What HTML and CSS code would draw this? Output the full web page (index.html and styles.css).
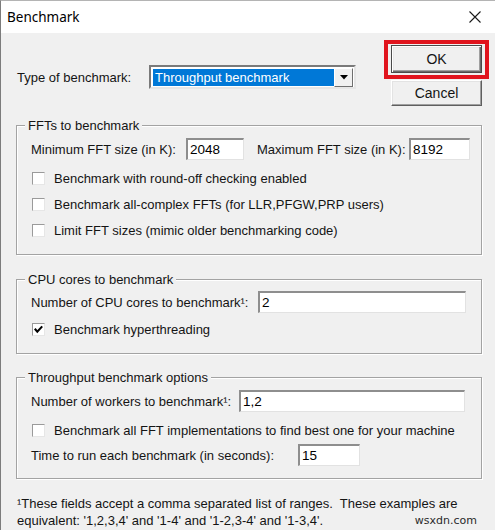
FILE: index.html
```html
<!DOCTYPE html>
<html>
<head>
<meta charset="utf-8">
<title>Benchmark</title>
<link rel="stylesheet" href="styles.css">
</head>
<body>
<div class="window">
  <div class="titlebar">
    <span class="title">Benchmark</span>
    <svg class="close" width="12" height="12" viewBox="0 0 12 12"><path d="M0.5 0.5L11.5 11.5M11.5 0.5L0.5 11.5" stroke="#1a1a1a" stroke-width="1.1" fill="none"/></svg>
  </div>
  <div class="content">
    <div class="top">
      <div class="type-row">
        <span class="lbl-type">Type of benchmark:</span>
        <div class="combo">
          <span class="combo-sel">Throughput benchmark</span>
          <span class="combo-btn"><svg width="8" height="5" viewBox="0 0 8 5"><path d="M0 0H8L4 4.5Z" fill="#000"/></svg></span>
        </div>
      </div>
      <div class="buttons">
        <div class="btn btn-default highlight">OK</div>
        <div class="btn">Cancel</div>
      </div>
    </div>

    <div class="group g1">
      <div class="legend">FFTs to benchmark</div>
      <div class="row">
        <span class="lbl lbl-min">Minimum FFT size (in K):</span>
        <span class="field f-min">2048</span>
        <span class="lbl lbl-max">Maximum FFT size (in K):</span>
        <span class="field f-max">8192</span>
      </div>
      <div class="cb-list">
        <div class="cb-row"><span class="box"></span><span class="cb-text">Benchmark with round-off checking enabled</span></div>
        <div class="cb-row"><span class="box"></span><span class="cb-text">Benchmark all-complex FFTs (for LLR,PFGW,PRP users)</span></div>
        <div class="cb-row"><span class="box"></span><span class="cb-text">Limit FFT sizes (mimic older benchmarking code)</span></div>
      </div>
    </div>

    <div class="group g2">
      <div class="legend">CPU cores to benchmark</div>
      <div class="row">
        <span class="lbl lbl-cpu">Number of CPU cores to benchmark¹:</span>
        <span class="field f-cpu">2</span>
      </div>
      <div class="cb-row cb-after"><span class="box"><svg width="11" height="11" viewBox="0 0 11 11"><path d="M1.8 4.8L4.3 7.6L9.2 2.4" stroke="#000" stroke-width="2.1" fill="none"/></svg></span><span class="cb-text">Benchmark hyperthreading</span></div>
    </div>

    <div class="group g3">
      <div class="legend">Throughput benchmark options</div>
      <div class="row">
        <span class="lbl lbl-workers">Number of workers to benchmark¹:</span>
        <span class="field f-workers">1,2</span>
      </div>
      <div class="cb-row cb-after3"><span class="box"></span><span class="cb-text">Benchmark all FFT implementations to find best one for your machine</span></div>
      <div class="row row-time">
        <span class="lbl lbl-time">Time to run each benchmark (in seconds):</span>
        <span class="field f-time">15</span>
      </div>
    </div>

    <div class="footnote">
      <div class="fn-line">¹These fields accept a comma separated list of ranges.&nbsp; These examples are</div>
      <div class="fn-line fn-last">
        <span>equivalent: '1,2,3,4' and '1-4' and '1-2,3-4' and '1-3,4'.</span>
        <span class="watermark">wsxdn.com</span>
      </div>
    </div>
  </div>
</div>
</body>
</html>
```

FILE: styles.css
```css
html, body {
  margin: 0;
  padding: 0;
}
body {
  width: 495px;
  height: 530px;
  overflow: hidden;
  background: #f0f0f0;
  font-family: "Liberation Sans", Arial, sans-serif;
  font-size: 13px;
  color: #141414;
}
.window {
  width: 494px;
  height: 529px;
  border-left: 1px solid #7c7c7c;
  border-top: 1px solid #b4b4b4;
  background: #f0f0f0;
}
.titlebar {
  height: 32px;
  background: #ffffff;
  display: flex;
  align-items: center;
  justify-content: space-between;
  padding: 0 14px 0 6px;
}
.title {
  font-family: "Noto Sans", "Open Sans", sans-serif;
  font-size: 13.5px;
  color: #000;
  margin-top: -1px;
}
.close {
  display: block;
  margin-top: -1px;
}
.content {
  padding: 0 13px 0 15px;
}
.top {
  display: flex;
  justify-content: space-between;
  align-items: flex-start;
  padding-top: 12px;
}
.type-row {
  display: flex;
  align-items: center;
  margin-top: 20px;
  margin-left: 1px;
}
.lbl-type {
  width: 132px;
}
.combo {
  width: 207px;
  height: 24px;
  box-sizing: border-box;
  border-style: solid;
  border-width: 2px;
  border-color: #7a7a7a #e6e6e6 #e6e6e6 #7a7a7a;
  background: #ffffff;
  display: flex;
  align-items: center;
  padding-right: 1px;
}
.combo-sel {
  flex: 1;
  height: 17px;
  line-height: 17px;
  margin-left: 2px;
  background: #0078d7;
  color: #ffffff;
  padding-left: 2px;
}
.combo-btn {
  width: 19px;
  height: 19px;
  box-sizing: border-box;
  border-style: solid;
  border-width: 1px;
  border-color: #ffffff #6f6f6f #6f6f6f #ffffff;
  background: #f0f0f0;
  display: flex;
  align-items: center;
  justify-content: center;
}
.combo-btn svg {
  display: block;
}
.buttons {
  display: flex;
  flex-direction: column;
  gap: 7px;
}
.btn {
  width: 91px;
  height: 26px;
  box-sizing: border-box;
  display: flex;
  align-items: center;
  justify-content: center;
  background: #f0f0f0;
  border-style: solid;
  border-width: 1px;
  border-color: #ffffff #5f5f5f #5f5f5f #ffffff;
  box-shadow: inset -1px -1px 0 #a0a0a0, inset 1px 1px 0 #e3e3e3;
  font-size: 14px;
}
.btn-default {
  height: 28px;
  border: 1px solid #4a4a4a;
  box-shadow: inset 1px 1px 0 #ffffff, inset -1px -1px 0 #6a6a6a, inset -2px -2px 0 #a0a0a0, inset 2px 2px 0 #e8e8e8;
}
.highlight {
  position: relative;
}
.highlight::after {
  content: "";
  position: absolute;
  left: -8px;
  right: -8px;
  top: -6px;
  bottom: -7px;
  border: 4px solid #e0141d;
  pointer-events: none;
}
.group {
  border: 1px solid #a3a3a3;
  box-shadow: 1px 1px 0 #ffffff, inset 1px 1px 0 #ffffff;
  padding: 0 0 11px 14px;
}
.g1 { margin-top: 19px; }
.g2 { margin-top: 24px; }
.g3 { margin-top: 23px; padding-bottom: 12px; }
.legend {
  width: fit-content;
  margin-top: -8px;
  margin-left: -6px;
  padding: 0 3px;
  height: 15px;
  line-height: 15px;
  background: #f0f0f0;
}
.row {
  display: flex;
  align-items: center;
  margin-top: 5px;
  height: 22px;
}
.g2 .row { margin-top: 4px; }
.lbl {
  white-space: nowrap;
  flex-shrink: 0;
}
.lbl-min { width: 155px; }
.lbl-max { width: 152px; margin-left: 13px; }
.lbl-cpu { width: 227px; }
.lbl-workers { width: 208px; }
.lbl-time { width: 267px; }
.field {
  flex-shrink: 0;
  height: 22px;
  box-sizing: border-box;
  background: #ffffff;
  border-style: solid;
  border-width: 2px 1px 1px 2px;
  border-color: #8e8e8e #e2e2e2 #e2e2e2 #8e8e8e;
  padding-left: 2px;
  line-height: 19px;
  font-size: 13.5px;
  color: #000;
}
.f-min { width: 58px; }
.f-max { width: 61px; }
.f-cpu { width: 208px; }
.f-workers { width: 226px; }
.f-time { width: 62px; }
.cb-list {
  margin-top: 5px;
}
.cb-row {
  display: flex;
  align-items: center;
  height: 26px;
}
.cb-after { margin-top: 3px; }
.cb-after3 { margin-top: 5px; }
.row-time { margin-top: 1px; }
.box {
  width: 13px;
  height: 13px;
  box-sizing: border-box;
  margin-left: 1px;
  margin-right: 9px;
  background: #ffffff;
  border-style: solid;
  border-width: 1px;
  border-color: #9a9a9a #e6e6e6 #e6e6e6 #9a9a9a;
  display: flex;
  align-items: center;
  justify-content: center;
  flex-shrink: 0;
}
.box svg {
  display: block;
}
.cb-text {
  white-space: nowrap;
}
.footnote {
  margin-top: 16px;
  margin-left: 1px;
}
.fn-line {
  height: 17px;
  line-height: 17px;
  white-space: nowrap;
}
.fn-last {
  display: flex;
  justify-content: space-between;
}
.watermark {
  font-family: "DejaVu Sans", sans-serif;
  font-size: 11px;
  color: #2a2a2a;
  margin-right: 5px;
}
```
